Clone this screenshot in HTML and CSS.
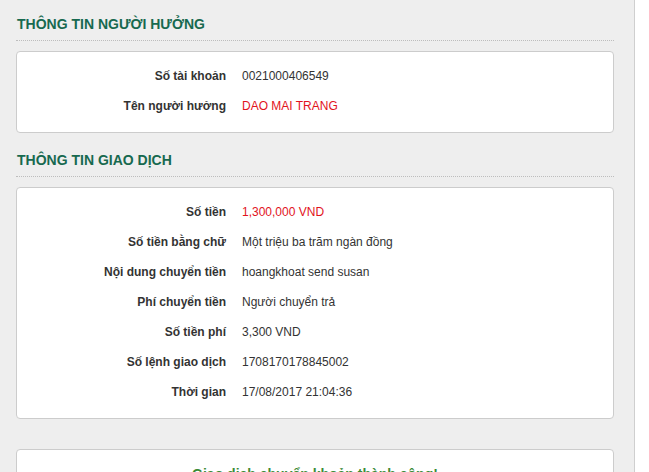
FILE: index.html
```html
<!DOCTYPE html>
<html lang="vi">
<head>
<meta charset="utf-8">
<title>Thông tin giao dịch</title>
<link rel="stylesheet" href="styles.css">
</head>
<body>
<div class="page">
  <h2 class="section-title">THÔNG TIN NGƯỜI HƯỞNG</h2>
  <div class="card">
    <dl class="info">
      <dt>Số tài khoản</dt><dd>0021000406549</dd>
      <dt>Tên người hưởng</dt><dd class="red">DAO MAI TRANG</dd>
    </dl>
  </div>

  <h2 class="section-title">THÔNG TIN GIAO DỊCH</h2>
  <div class="card">
    <dl class="info">
      <dt>Số tiền</dt><dd class="red">1,300,000 VND</dd>
      <dt>Số tiền bằng chữ</dt><dd>Một triệu ba trăm ngàn đồng</dd>
      <dt>Nội dung chuyển tiền</dt><dd>hoangkhoat send susan</dd>
      <dt>Phí chuyển tiền</dt><dd>Người chuyển trả</dd>
      <dt>Số tiền phí</dt><dd>3,300 VND</dd>
      <dt>Số lệnh giao dịch</dt><dd>1708170178845002</dd>
      <dt>Thời gian</dt><dd>17/08/2017 21:04:36</dd>
    </dl>
  </div>

  <div class="card result">
    <p class="success">Giao dịch chuyển khoản thành công!</p>
  </div>
</div>
</body>
</html>
```
FILE: styles.css
```css
html, body {
  margin: 0;
  padding: 0;
  overflow: hidden;
  background: #ffffff;
}

body {
  font-family: "Liberation Sans", Arial, sans-serif;
  font-size: 12px;
  color: #333333;
}

.page {
  width: 598px;
  min-height: 472px;
  padding: 14px 20px 0 16px;
  background: #eeeeee;
  border-right: 1px solid #cfcfcf;
}

.section-title {
  margin: 0 0 10px;
  padding: 0 0 6px 1px;
  font-size: 14px;
  line-height: 20px;
  font-weight: bold;
  color: #17694f;
  border-bottom: 1px dotted #bdbdbd;
}

.card {
  background: #ffffff;
  border: 1px solid #cccccc;
  border-radius: 4px;
  padding: 9px 0 11px;
  margin-bottom: 17px;
}

.info {
  display: grid;
  grid-template-columns: 209px 1fr;
  column-gap: 16px;
  margin: 0;
  line-height: 30px;
}

.info dt {
  text-align: right;
  font-weight: bold;
}

.info dd {
  margin: 0;
}

.red {
  color: #e2131c;
}

.result {
  margin-top: 30px;
  padding: 14px 0 20px;
}

.success {
  margin: 0;
  text-align: center;
  font-size: 14px;
  line-height: 20px;
  font-weight: bold;
  color: #3b8b36;
}
```
